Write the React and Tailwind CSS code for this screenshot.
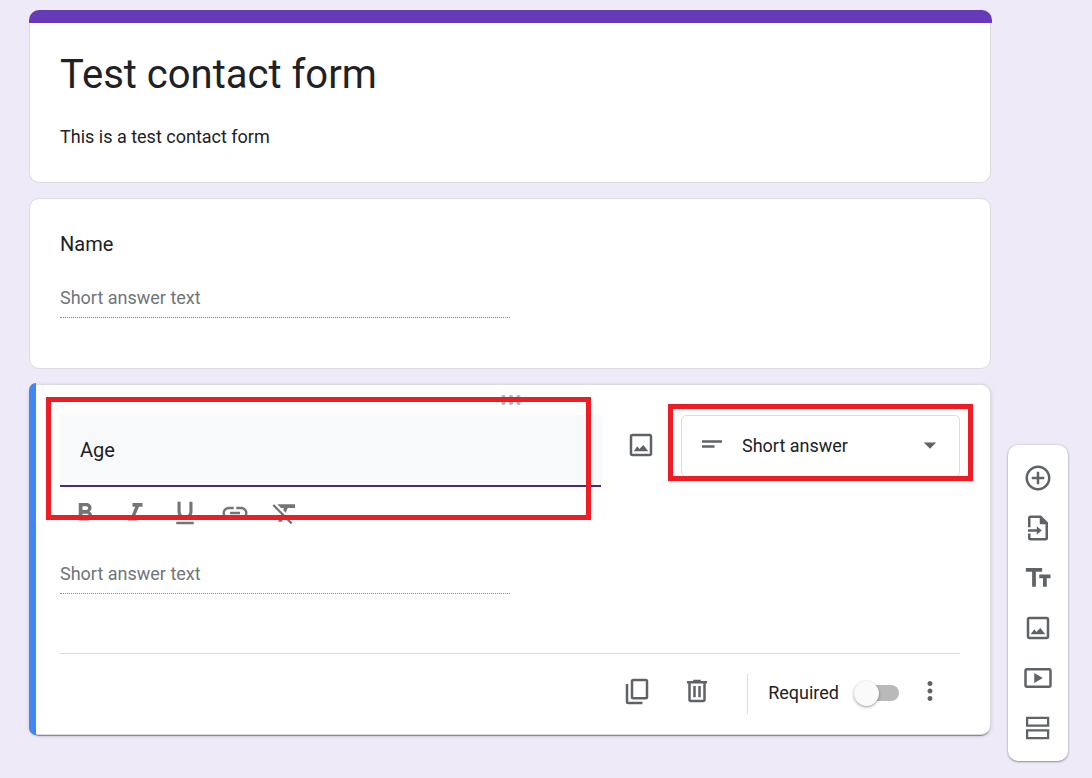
import { useState } from 'react';
import {
  MdAddCircleOutline,
  MdArrowDropDown,
  MdFormatBold,
  MdFormatClear,
  MdFormatItalic,
  MdFormatUnderlined,
  MdLink,
  MdMoreVert,
  MdShortText,
} from 'react-icons/md';

function Icon({ children }) {
  return (
    <svg viewBox="0 0 24 24" className="size-[30px]" fill="currentColor" aria-hidden="true">
      {children}
    </svg>
  );
}

function ImageIcon() {
  return (
    <Icon>
      <path d="M19 5v14H5V5h14m0-2H5c-1.1 0-2 .9-2 2v14c0 1.1.9 2 2 2h14c1.1 0 2-.9 2-2V5c0-1.1-.9-2-2-2z" />
      <path d="M6.2 17l2.8-4 1.7 2.1L13.9 12l3.9 5z" />
    </Icon>
  );
}

function CopyIcon() {
  return (
    <Icon>
      <rect x="8" y="3.2" width="12" height="14.6" rx="1" fill="none" stroke="currentColor" strokeWidth="2" />
      <path d="M4 6.4v14.1a1 1 0 0 0 1 1h11.4" fill="none" stroke="currentColor" strokeWidth="2" />
    </Icon>
  );
}

function TrashIcon() {
  return (
    <Icon>
      <path d="M15 4V3H9v1H4v2h1v13c0 1.1.9 2 2 2h10c1.1 0 2-.9 2-2V6h1V4h-5zm2 15H7V6h10v13zM9 8h2v9H9V8zm4 0h2v9h-2V8z" />
    </Icon>
  );
}

function ImportIcon() {
  return (
    <Icon>
      <path
        d="M5 11.4V4a1 1 0 0 1 1-1h8l5 5v12a1 1 0 0 1-1 1H6a1 1 0 0 1-1-1v-3.6"
        fill="none"
        stroke="currentColor"
        strokeWidth="2"
      />
      <path d="M13.4 2.6V9h6.2zM4 13h7v-2.4l4 3.4-4 3.4V15H4z" />
    </Icon>
  );
}

function TitleIcon() {
  return (
    <Icon>
      <path d="M2.3 4v3h5v12h3V7h5V4h-13zM22 9.2h-9v3h3V19h3v-6.8h3z" />
    </Icon>
  );
}

function VideoIcon() {
  return (
    <Icon>
      <path d="M21 4H3c-1.1 0-2 .9-2 2v12c0 1.1.9 2 2 2h18c1.1 0 2-.9 2-2V6c0-1.1-.9-2-2-2zm0 14H3V6h18v12zM9 8v8l6.8-4z" />
    </Icon>
  );
}

function SectionIcon() {
  return (
    <Icon>
      <path d="M2.4 3v8H21V3H2.4zm16.8 6.2h-15V4.8h15v4.4zM2.4 13v8H21v-8H2.4zm16.8 6.2h-15v-4.4h15v4.4z" />
    </Icon>
  );
}

const formatTools = [
  { label: 'Bold', icon: <MdFormatBold size={30} /> },
  { label: 'Italic', icon: <MdFormatItalic size={30} /> },
  { label: 'Underline', icon: <MdFormatUnderlined size={30} /> },
  { label: 'Insert link', icon: <MdLink size={30} /> },
  { label: 'Remove formatting', icon: <MdFormatClear size={30} /> },
];

const sideTools = [
  { label: 'Add question', icon: <MdAddCircleOutline size={30} /> },
  { label: 'Import questions', icon: <ImportIcon /> },
  { label: 'Add title and description', icon: <TitleIcon /> },
  { label: 'Add image', icon: <ImageIcon /> },
  { label: 'Add video', icon: <VideoIcon /> },
  { label: 'Add section', icon: <SectionIcon /> },
];

function AnswerPreview({ label }) {
  return (
    <input
      type="text"
      disabled
      aria-label={label}
      placeholder="Short answer text"
      className="block h-8 w-1/2 border-b border-dotted border-[#8a8a8a] pb-[8px] text-[18px] leading-6 placeholder:text-[#70757a]"
    />
  );
}

function HeaderCard() {
  return (
    <section>
      <div className="-mr-px h-[13px] rounded-t-[10px] bg-[#673ab7]" />
      <div className="rounded-b-[10px] border border-t-0 border-[#dadce0] bg-white px-[30px] pt-7 pb-[33px]">
        <h1 className="text-[40px] leading-12">Test contact form</h1>
        <p className="mt-[26px] text-[18px] leading-6">This is a test contact form</p>
      </div>
    </section>
  );
}

function NameCard() {
  return (
    <section className="rounded-[10px] border border-[#dadce0] bg-white px-[30px] pt-[33px] pb-[50px]">
      <h2 className="mb-[30px] text-[20px] leading-6">Name</h2>
      <AnswerPreview label="Name answer" />
    </section>
  );
}

function ActiveCard() {
  const [question, setQuestion] = useState('Age');
  const [required, setRequired] = useState(false);

  return (
    <section className="relative rounded-[10px] border border-[#dadce0] bg-white px-[30px] shadow-[0_2px_1px_-1px_rgba(0,0,0,0.4),0_1px_4px_rgba(0,0,0,0.14)]">
      {/* Active marker */}
      <div className="absolute -top-[2px] -bottom-px -left-px w-[7px] rounded-l-[8px] bg-[#4285f4]" />

      <div className="flex h-[30px] items-center justify-center pl-0.5 text-[#b4b4b4]">
        <svg width="20" height="10" viewBox="0 0 20 10" fill="currentColor" aria-hidden="true">
          <circle cx="2.5" cy="2.2" r="2.2" />
          <circle cx="10" cy="2.2" r="2.2" />
          <circle cx="17.5" cy="2.2" r="2.2" />
          <circle cx="2.5" cy="7.8" r="2.2" />
          <circle cx="10" cy="7.8" r="2.2" />
          <circle cx="17.5" cy="7.8" r="2.2" />
        </svg>
      </div>

      <div className="flex items-start">
        <input
          type="text"
          aria-label="Question"
          value={question}
          onChange={(e) => setQuestion(e.target.value)}
          className="h-[72px] min-w-0 flex-1 border-b-2 border-[#4b2a86] bg-[#f8f9fa] px-5 text-[20px] outline-none"
        />
        <button type="button" aria-label="Add image" className="flex h-[60px] w-20 items-center justify-center text-[#5f6368]">
          <ImageIcon />
        </button>
        <div className="relative w-[279px] text-[#5f6368]">
          <select
            aria-label="Question type"
            className="h-[62px] w-full appearance-none rounded-[5px] border border-[#dadce0] bg-white pb-0.5 pl-[60px] text-[18px] text-[#202124]"
          >
            <option>Short answer</option>
          </select>
          <MdShortText size={30} className="pointer-events-none absolute top-[14px] left-4" />
          <MdArrowDropDown size={30} className="pointer-events-none absolute top-[15px] right-[15px]" />
        </div>
      </div>

      <div className="mt-[11px] mb-[34px] flex gap-5 pl-[10px] text-[#757575]">
        {formatTools.map((tool) => (
          <button key={tool.label} type="button" aria-label={tool.label}>
            {tool.icon}
          </button>
        ))}
      </div>

      <AnswerPreview label="Age answer" />

      <div className="mt-[59px] flex h-[81px] items-start justify-end border-t border-[#dadce0] pt-5 text-[#5f6368]">
        <button type="button" aria-label="Duplicate" className="flex h-[34px] w-[60px] items-center justify-center">
          <CopyIcon />
        </button>
        <button type="button" aria-label="Delete" className="flex h-[34px] w-[60px] items-center justify-center">
          <TrashIcon />
        </button>
        <div className="mr-5 ml-5 h-10 w-px bg-[#dadce0]" />
        <label className="flex h-9 items-center gap-[15px] text-[18px] text-[#202124]">
          Required
          <input
            type="checkbox"
            checked={required}
            onChange={(e) => setRequired(e.target.checked)}
            className="peer sr-only"
          />
          <span className="mt-0.5 ml-[5px] flex h-4 w-10 items-center rounded-full bg-[#b9b9b9] peer-checked:justify-end">
            <span className="-ml-[5px] size-[25px] shrink-0 rounded-full bg-[#fafafa] shadow-[0_1px_3px_rgba(0,0,0,0.4)]" />
          </span>
        </label>
        <button type="button" aria-label="More options" className="mr-[15px] ml-4 flex h-[34px] items-center">
          <MdMoreVert size={30} />
        </button>
      </div>

      {/* Highlight boxes */}
      <div className="pointer-events-none absolute top-3 right-[399px] left-4 h-[123px] border-5 border-[#ee1c25]" />
      <div className="pointer-events-none absolute top-[19px] right-[17px] h-[77px] w-[305px] border-5 border-[#ee1c25]" />
    </section>
  );
}

export default function App() {
  return (
    <div className="flex min-h-screen items-start gap-[17px] bg-[#eeeaf8] pt-[10px] pr-6 pl-[29px] font-[Roboto,sans-serif] text-[#202124]">
      <main className="flex min-w-0 flex-1 flex-col gap-[15px]">
        <HeaderCard />
        <NameCard />
        <ActiveCard />
      </main>

      <aside className="mt-[435px] flex w-[60px] flex-col rounded-[10px] bg-white py-2 text-[#5f6368] shadow-[0_1px_2px_rgba(0,0,0,0.35),0_0_3px_rgba(0,0,0,0.15)]">
        {sideTools.map((tool) => (
          <button key={tool.label} type="button" aria-label={tool.label} className="flex h-[50px] items-center justify-center">
            {tool.icon}
          </button>
        ))}
      </aside>
    </div>
  );
}
